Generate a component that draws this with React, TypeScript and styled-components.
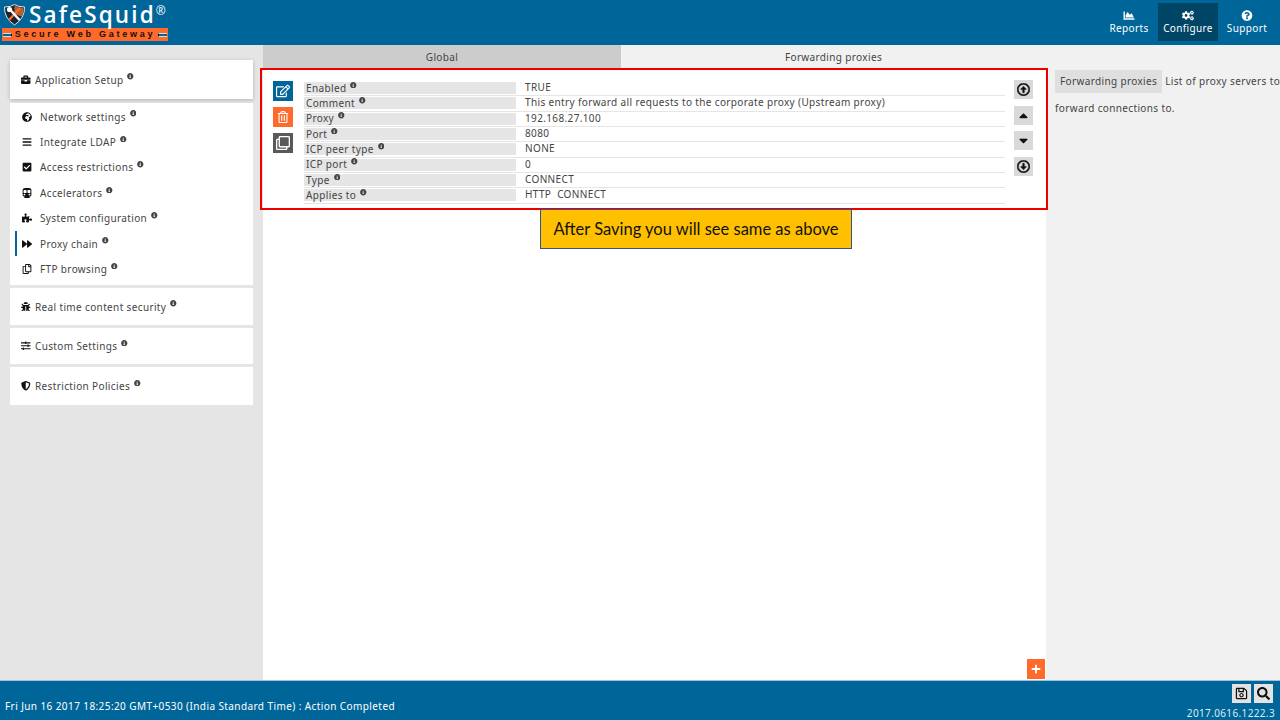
import React from 'react';
import styled, { createGlobalStyle } from 'styled-components';
import { IconType } from 'react-icons';
import {
  FaBars, FaBriefcase, FaBug, FaCaretDown, FaCaretUp, FaChartArea, FaCheckSquare, FaCogs,
  FaForward, FaGlobeAfrica, FaInfoCircle, FaPlus, FaPuzzlePiece, FaQuestionCircle,
  FaRegArrowAltCircleDown, FaRegArrowAltCircleUp, FaRegClone, FaRegCopy, FaRegEdit, FaRegSave,
  FaRegTrashAlt, FaSearch, FaShieldAlt, FaSlidersH, FaSubway,
} from 'react-icons/fa';

const blue = '#006699';
const orange = '#ff6a2b';
const text = '#444';

const Global = createGlobalStyle`
  html, body { margin: 0; padding: 0; height: 100%; }
  body { font-family: "Noto Sans", "Open Sans", sans-serif; font-size: 10px; letter-spacing: 0.36px; color: ${text}; overflow: hidden; }
`;

const Page = styled.div`
  position: relative;
  width: 1280px;
  height: 720px;
  display: grid;
  grid-template-rows: 45px 1fr 40px;
  background: #f1f1f1;
`;

const Header = styled.header`
  background: ${blue};
  display: flex;
  justify-content: space-between;
  align-items: flex-start;
`;

const Logo = styled.div`
  width: 166px;
  margin: 3px 0 0 2px;
`;

const LogoTop = styled.div`
  display: flex;
  align-items: center;
  height: 23px;
  gap: 3px;
  svg { flex: none; margin-left: 1px; }
`;

const LogoName = styled.span`
  font-family: "Open Sans", sans-serif;
  font-size: 22.5px;
  font-weight: 600;
  letter-spacing: 2.15px;
  color: #fff;
  line-height: 23px;
  white-space: nowrap;
  sup { font-size: 12px; font-weight: 400; letter-spacing: 0; vertical-align: 8px; line-height: 0; }
`;

const LogoBar = styled.div`
  margin-top: 2px;
  height: 13px;
  background: ${orange};
  display: flex;
  align-items: center;
  justify-content: space-between;
  padding: 0 1px;
`;

const LogoTagline = styled.span`
  color: #111;
  font-family: "Liberation Sans", sans-serif;
  font-size: 9px;
  font-weight: 700;
  letter-spacing: 2.75px;
  line-height: 13px;
  white-space: nowrap;
`;

const LogoNotch = styled.span<{ $flip?: boolean }>`
  width: 9px;
  height: 4px;
  background: ${blue};
  box-sizing: border-box;
  border-top: 1px solid #cfe0ea;
  border-bottom: 1px solid #cfe0ea;
  ${p => (p.$flip ? 'border-left' : 'border-right')}: 1px solid #111;
`;

const TopNav = styled.nav`
  display: flex;
  margin: 3px 4px 0 0;
`;

const NavItem = styled.div<{ $active?: boolean }>`
  width: ${p => (p.$active ? '60px' : '58px')};
  height: 38px;
  background: ${p => (p.$active ? '#004466' : 'transparent')};
  color: #fff;
  display: flex;
  flex-direction: column;
  align-items: center;
  justify-content: flex-start;
  padding-top: 7px;
  box-sizing: border-box;
  line-height: 14px;
  svg { font-size: 12px; height: 11px; }
`;

const Middle = styled.div`
  display: grid;
  grid-template-columns: 263px 783px 1fr;
  min-height: 0;
`;

const Sidebar = styled.aside`
  background: #e5e5e5;
  padding: 15px 10px 0;
  display: flex;
  flex-direction: column;
  align-items: stretch;
`;

const Card = styled.div<{ $h: number; $shadow?: boolean }>`
  background: #fff;
  height: ${p => p.$h}px;
  box-sizing: border-box;
  margin-bottom: ${p => (p.$shadow ? '4px' : '3px')};
  display: flex;
  flex-direction: column;
  justify-content: center;
  box-shadow: ${p => (p.$shadow ? '0 1px 4px rgba(0,0,0,.22)' : 'none')};
`;

const GroupCard = styled(Card)`
  justify-content: flex-start;
  padding-top: 1px;
`;

const MenuRow = styled.div<{ $sub?: boolean; $active?: boolean }>`
  display: flex;
  align-items: center;
  height: ${p => (p.$sub ? '25.4px' : '25px')};
  flex: none;
  padding-left: ${p => (p.$sub ? '5px' : '9px')};
  margin-left: ${p => (p.$sub ? '5px' : '0')};
  border-left: 2px solid ${p => (p.$active ? blue : 'transparent')};
  white-space: nowrap;
`;

const MenuIcon = styled.span<{ $sub?: boolean }>`
  width: ${p => (p.$sub ? '18px' : '14px')};
  display: inline-flex;
  color: #111;
  font-size: ${p => (p.$sub ? '10px' : '9.5px')};
  svg { display: block; }
`;

const Info = styled(FaInfoCircle)`
  font-size: 6.5px;
  color: #444;
  margin-left: 4px;
  position: relative;
  top: -3px;
  flex: none;
`;

const Main = styled.main`
  background: #fff;
  display: flex;
  flex-direction: column;
  position: relative;
`;

const Tabs = styled.div`
  display: grid;
  grid-template-columns: 358px 1fr;
  height: 23px;
  flex: none;
`;

const Tab = styled.div<{ $active?: boolean }>`
  background: ${p => (p.$active ? '#f1f1f1' : '#cccccc')};
  display: flex;
  align-items: center;
  justify-content: center;
`;

const Entry = styled.div`
  display: flex;
  padding: 13px 13px 0 10px;
`;

const Tools = styled.div`
  width: 31px;
  flex: none;
  display: flex;
  flex-direction: column;
  gap: 6px;
`;

const ToolButton = styled.div<{ $bg: string; $size: number }>`
  width: 20px;
  height: 20px;
  background: ${p => p.$bg};
  color: #fff;
  display: flex;
  align-items: center;
  justify-content: center;
  font-size: ${p => p.$size}px;
`;

const Fields = styled.div`
  width: 701px;
  flex: none;
`;

const FieldRow = styled.div`
  display: grid;
  grid-template-columns: 212px 1fr;
  height: 15.35px;
  box-sizing: border-box;
  border-bottom: 1px solid #e5e5e5;
  line-height: 13px;
`;

const FieldLabel = styled.div`
  background: #e5e5e5;
  padding-left: 2px;
  display: flex;
  align-items: center;
  height: 12px;
  margin-top: 1px;
`;

const FieldValue = styled.div`
  padding-left: 9px;
  white-space: nowrap;
`;

const Movers = styled.div`
  margin: -1px 0 0 9px;
  display: flex;
  flex-direction: column;
  gap: 6.6px;
`;

const MoveButton = styled.div`
  width: 19px;
  height: 19px;
  background: #d9d9d9;
  color: #111;
  display: flex;
  align-items: center;
  justify-content: center;
  font-size: 13px;
  svg { stroke: #111; stroke-width: 20px; }
`;

const AddButton = styled.div`
  position: absolute;
  right: 1px;
  bottom: 1px;
  width: 18px;
  height: 20px;
  background: ${orange};
  color: #fff;
  display: flex;
  align-items: center;
  justify-content: center;
  font-size: 10px;
`;

const Help = styled.aside`
  padding: 23px 0 0 9px;
  line-height: 27px;
  white-space: nowrap;
  overflow: hidden;
`;

const HelpTag = styled.span`
  display: inline-block;
  background: #dfdfdf;
  padding: 0 5px;
  height: 23px;
  line-height: 23px;
  margin-right: 3px;
`;

const Footer = styled.footer`
  background: ${blue};
  border-top: 1px solid #9cc3d8;
  color: #fff;
  display: flex;
  justify-content: space-between;
  padding: 0 5px;
`;

const Status = styled.div`
  margin-top: 18px;
  line-height: 14px;
  letter-spacing: 0.41px;
`;

const FooterRight = styled.div`
  display: flex;
  flex-direction: column;
  align-items: flex-end;
  padding-top: 3px;
  color: #dcecf5;
`;

const FooterButtons = styled.div`
  display: flex;
  gap: 3px;
  margin-right: 2px;
`;

const FooterButton = styled.div`
  width: 19px;
  height: 19px;
  background: #e3e3e3;
  color: #111;
  display: flex;
  align-items: center;
  justify-content: center;
  font-size: 13px;
`;

const Version = styled.div`
  line-height: 14px;
  margin-top: 3px;
`;

const RedFrame = styled.div`
  position: absolute;
  left: 260px;
  top: 68px;
  width: 788px;
  height: 142px;
  box-sizing: border-box;
  border: 2px solid #ee0000;
  pointer-events: none;
`;

const Callout = styled.div`
  position: absolute;
  left: 540px;
  top: 209px;
  width: 312px;
  height: 40px;
  box-sizing: border-box;
  background: #ffc000;
  border: 1px solid #2f5597;
  color: #111;
  font-family: Lato, "Open Sans", sans-serif;
  font-size: 16.5px;
  letter-spacing: 0;
  display: flex;
  align-items: center;
  justify-content: center;
`;

const Shield = () => (
  <svg width="23" height="23" viewBox="0 0 23 23">
    <path d="M1.5 4 Q8 4 11.5 1.5 Q15 4 21.5 4 Q22 15 11.5 22 Q1 15 1.5 4 Z" fill="#1b2430" stroke="#dfe6ea" strokeWidth="1" />
    <path d="M11.5 2.5 Q15 4.5 20.5 5 Q20.5 10 18.5 13.5 L11.5 11 Z" fill="#b4622e" />
    <path d="M17 5 L6 17" stroke="#ff6a2b" strokeWidth="2.2" />
    <path d="M6.5 6 L16.5 17" stroke="#fff" strokeWidth="2.4" />
    <circle cx="6.5" cy="6.5" r="2.6" fill="#fff" />
  </svg>
);

type MenuItem = { icon: IconType; label: string; active?: boolean };

const subItems: MenuItem[] = [
  { icon: FaGlobeAfrica, label: 'Network settings' },
  { icon: FaBars, label: 'Integrate LDAP' },
  { icon: FaCheckSquare, label: 'Access restrictions' },
  { icon: FaSubway, label: 'Accelerators' },
  { icon: FaPuzzlePiece, label: 'System configuration' },
  { icon: FaForward, label: 'Proxy chain', active: true },
  { icon: FaRegCopy, label: 'FTP browsing' },
];

const fields = [
  ['Enabled', 'TRUE'],
  ['Comment', 'This entry forward all requests to the corporate proxy (Upstream proxy)'],
  ['Proxy', '192.168.27.100'],
  ['Port', '8080'],
  ['ICP peer type', 'NONE'],
  ['ICP port', '0'],
  ['Type', 'CONNECT'],
  ['Applies to', 'HTTP\u00a0\u00a0CONNECT'],
];

const TopLevel = ({ icon: Icon, label, h, shadow }: { icon: IconType; label: string; h: number; shadow?: boolean }) => (
  <Card $h={h} $shadow={shadow}>
    <MenuRow>
      <MenuIcon><Icon /></MenuIcon>
      {label}
      <Info />
    </MenuRow>
  </Card>
);

export default function App() {
  return (
    <Page>
      <Global />
      <Header>
        <Logo>
          <LogoTop>
            <Shield />
            <LogoName>SafeSquid<sup>®</sup></LogoName>
          </LogoTop>
          <LogoBar>
            <LogoNotch />
            <LogoTagline>Secure Web Gateway</LogoTagline>
            <LogoNotch $flip />
          </LogoBar>
        </Logo>
        <TopNav>
          <NavItem><FaChartArea />Reports</NavItem>
          <NavItem $active><FaCogs />Configure</NavItem>
          <NavItem><FaQuestionCircle />Support</NavItem>
        </TopNav>
      </Header>

      <Middle>
        <Sidebar>
          <TopLevel icon={FaBriefcase} label="Application Setup" h={39} shadow />
          <GroupCard $h={182}>
            {subItems.map(item => (
              <MenuRow key={item.label} $sub $active={item.active}>
                <MenuIcon $sub><item.icon /></MenuIcon>
                {item.label}
                <Info />
              </MenuRow>
            ))}
          </GroupCard>
          <TopLevel icon={FaBug} label="Real time content security" h={37} />
          <TopLevel icon={FaSlidersH} label="Custom Settings" h={36} />
          <TopLevel icon={FaShieldAlt} label="Restriction Policies" h={38} />
        </Sidebar>

        <Main>
          <Tabs>
            <Tab>Global</Tab>
            <Tab $active>Forwarding proxies</Tab>
          </Tabs>
          <Entry>
            <Tools>
              <ToolButton $bg={blue} $size={14}><FaRegEdit /></ToolButton>
              <ToolButton $bg={orange} $size={12}><FaRegTrashAlt /></ToolButton>
              <ToolButton $bg="#595959" $size={14}><FaRegClone /></ToolButton>
            </Tools>
            <Fields>
              {fields.map(([label, value]) => (
                <FieldRow key={label}>
                  <FieldLabel>{label}<Info /></FieldLabel>
                  <FieldValue>{value}</FieldValue>
                </FieldRow>
              ))}
            </Fields>
            <Movers>
              <MoveButton><FaRegArrowAltCircleUp /></MoveButton>
              <MoveButton><FaCaretUp /></MoveButton>
              <MoveButton><FaCaretDown /></MoveButton>
              <MoveButton><FaRegArrowAltCircleDown /></MoveButton>
            </Movers>
          </Entry>
          <AddButton><FaPlus /></AddButton>
        </Main>

        <Help>
          <HelpTag>Forwarding proxies</HelpTag>List of proxy servers to<br />forward connections to.
        </Help>
      </Middle>

      <Footer>
        <Status>Fri Jun 16 2017 18:25:20 GMT+0530 (India Standard Time) : Action Completed</Status>
        <FooterRight>
          <FooterButtons>
            <FooterButton><FaRegSave /></FooterButton>
            <FooterButton><FaSearch /></FooterButton>
          </FooterButtons>
          <Version>2017.0616.1222.3</Version>
        </FooterRight>
      </Footer>

      <RedFrame />
      <Callout>After Saving you will see same as above</Callout>
    </Page>
  );
}
